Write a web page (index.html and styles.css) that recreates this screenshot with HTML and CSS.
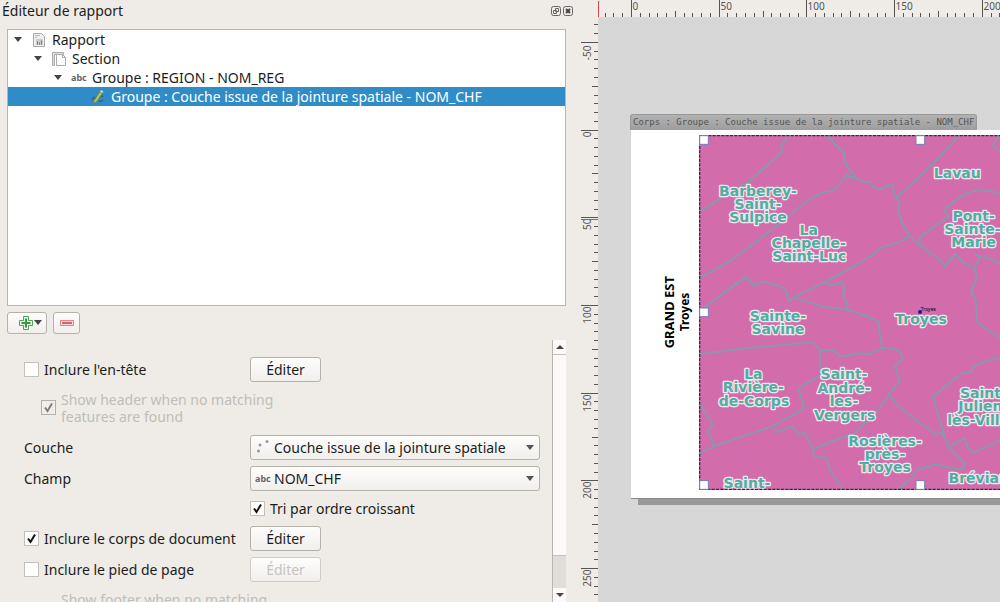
FILE: index.html
```
<!DOCTYPE html>
<html lang="fr">
<head>
    <meta charset="UTF-8">
    <meta name="viewport" content="width=device-width, initial-scale=1.0">
    <title>Éditeur de rapport</title>
    <link rel="stylesheet" href="styles.css">
</head>
<body>
    <aside class="panel">
        <header class="panel-title">
            <h1>Éditeur de rapport</h1>
            <button class="dock-btn" aria-label="Détacher">
                <svg width="10" height="10" viewBox="0 0 10 10"><rect x=".5" y=".5" width="9" height="9" rx="2"/><path d="M4.500 2.500h3v3h-3zM2.500 4.500h3v3h-3z"/></svg>
            </button>
            <button class="dock-btn" aria-label="Fermer">
                <svg width="10" height="10" viewBox="0 0 10 10"><rect x=".5" y=".5" width="9" height="9" rx="2"/><path class="cross" d="M3 3l4 4M7 3l-4 4"/></svg>
            </button>
        </header>

        <ul class="tree">
            <li class="row level-0">
                <span class="arrow"></span>
                <svg class="icon" width="16" height="16" viewBox="0 0 16 16"><path d="M2.500 1.500h8l3 3v10h-11z" fill="#eee" stroke="#aaa"/><path d="M4 3.500h5M4 5.500h2" stroke="#bbb"/><rect x="5" y="7" width="7" height="6" fill="#ccc"/><path d="M6.500 12.500v-3M8.500 12.500v-2M10.500 12.500v-4" stroke="#777"/></svg>
                <span>Rapport</span>
            </li>
            <li class="row level-1">
                <span class="arrow"></span>
                <svg class="icon" width="16" height="16" viewBox="0 0 16 16"><path d="M1.500 1.500h11v2h-9v11h-2z" fill="#ddd" stroke="#aaa"/><path d="M5.500 3.500h6l3 3v8h-9z" fill="#fff" stroke="#aaa"/><path d="M11.500 3.500v3h3" fill="none" stroke="#aaa"/></svg>
                <span>Section</span>
            </li>
            <li class="row level-2">
                <span class="arrow"></span>
                <span class="abc">abc</span>
                <span>Groupe : REGION - NOM_REG</span>
            </li>
            <li class="row level-3 selected">
                <svg class="icon" width="16" height="16" viewBox="0 0 16 16"><path d="M2 11q2-5 4 0M9 12q3 1 4-1M9 8q3-2 4 0" fill="none" stroke="#3c5f7a" stroke-width="1.500"/><path d="M4 11.500l6-9 2.500 1.500-6 9-3 1.500z" fill="#b5c65c" stroke="#5d7440" stroke-width=".7"/><path d="M10 2.500l1-1.500 2.500 1.500-1 1.500z" fill="#d8d8b0"/></svg>
                <span>Groupe : Couche issue de la jointure spatiale - NOM_CHF</span>
            </li>
        </ul>

        <div class="toolbar">
            <button class="tool add" aria-label="Ajouter">
                <svg width="16" height="16" viewBox="0 0 16 16"><path d="M5.500 1.500h5v4h4v5h-4v4h-5v-4h-4v-5h4z" fill="#e4f3e4" stroke="#57a05c"/><path d="M8 3.500v9M3.500 8h9" stroke="#3f9347" stroke-width="2"/></svg>
                <span class="arrow"></span>
            </button>
            <button class="tool remove" aria-label="Supprimer">
                <svg width="16" height="16" viewBox="0 0 16 16"><rect x="1.500" y="5.500" width="13" height="5" fill="#fbdcdc" stroke="#e3868b"/><path d="M3 8h10" stroke="#e0606a" stroke-width="2"/></svg>
            </button>
        </div>

        <div class="scroll-area">
            <form class="form">
                <label class="check"><input type="checkbox">Inclure l'en-tête</label>
                <button type="button" class="btn">Éditer</button>

                <label class="check hint"><input type="checkbox" checked disabled>Show header when no matching features are found</label>

                <label for="layer">Couche</label>
                <div class="combo">
                    <svg class="combo-icon" width="16" height="16" viewBox="0 0 16 16"><g fill="#999"><circle cx="5" cy="7" r="1.500"/><circle cx="12" cy="3.500" r="1.500"/><circle cx="3.500" cy="13" r="1.500"/></g></svg>
                    <select id="layer"><option>Couche issue de la jointure spatiale</option></select>
                </div>

                <label for="field">Champ</label>
                <div class="combo">
                    <span class="combo-icon abc">abc</span>
                    <select id="field"><option>NOM_CHF</option></select>
                </div>

                <label class="check second"><input type="checkbox" checked>Tri par ordre croissant</label>

                <label class="check"><input type="checkbox" checked>Inclure le corps de document</label>
                <button type="button" class="btn">Éditer</button>

                <label class="check"><input type="checkbox">Inclure le pied de page</label>
                <button type="button" class="btn" disabled>Éditer</button>

                <label class="check hint footer-hint"><input type="checkbox" checked disabled>Show footer when no matching features are found</label>
            </form>
            <div class="scrollbar">
                <span class="step up"></span>
                <span class="thumb"></span>
                <span class="step down"></span>
            </div>
        </div>
    </aside>

    <svg class="ruler ruler-y" id="rulerY"></svg>

    <main class="layout">
        <svg class="ruler ruler-x" id="rulerX"></svg>
        <div class="canvas">
            <div class="section-tab">Corps : Groupe : Couche issue de la jointure spatiale - NOM_CHF</div>
            <div class="paper">
                <div class="side-title">
                    <strong class="region">GRAND EST</strong>
                    <strong class="town">Troyes</strong>
                </div>
                <!-- 3 map units per pixel -->
                <svg class="map" viewBox="28 15 1329 1065">
                    <rect x="28" y="15" width="1329" height="1065" fill="#d26cab"/>
                    <g class="borders">
                        <path d="M300 15L275 45 277 65 262 80 240 100 175 155 100 200 28 247"/>
                        <path d="M410 15L440 45 465 70 463 90 480 120 500 145M470 135L490 150"/>
                        <path d="M28 444L110 400 150 372 200 335 300 255 340 222 390 190 430 182 460 150 470 135 500 145 520 155 540 155 550 170 575 178 590 167 610 165 612 190 620 203"/>
                        <path d="M810 15L740 90 685 145 620 203 630 215 627 250 640 285 660 318 690 345 705 355 750 390 765 408 797 372 825 400 855 415"/>
                        <path d="M660 318L620 340 575 352 555 370 500 405 402 458 313 502"/>
                        <path d="M705 355L690 345 690 322 740 285 778 260 765 245 770 232 820 195 850 184 880 180 910 184 950 198"/>
                        <path d="M950 12L925 20 910 45 930 65 950 70M855 375L900 385 950 410"/>
                        <path d="M28 545L100 490 170 440 195 468 215 455 270 468 288 480 297 512 313 502"/>
                        <path d="M402 458L430 465 460 457 465 475 460 500 470 515 475 540"/>
                        <path d="M313 502L400 530 475 540 530 558 567 575 570 610 578 655"/>
                        <path d="M28 672L200 652 370 637 390 660 430 660 445 673 460 680 500 670 540 672 578 655 610 655 630 665 640 685 615 710 632 750 600 790 585 815 545 860 490 912 440 930 370 957"/>
                        <path d="M390 660L392 735 325 775 345 835 250 888 200 905 75 948 28 971"/>
                        <path d="M855 415L862 440 845 485 858 510 862 575 895 600 950 635M870 380L862 400 855 415"/>
                        <path d="M950 682L895 690 850 710 845 725 820 728 790 750 730 800 750 870 765 920 775 950 825 1000 820 1015 795 1017 740 1003 680 1020 670 1040 625 1077"/>
                        <path d="M600 795L620 825 680 870 740 915 748 905 765 920"/>
                        <path d="M250 888L260 907 310 890 325 912 345 910 370 957 372 980 410 983 420 1020 460 1077"/>
                        <path d="M28 815L70 885 55 905 75 948"/>
                        <path d="M775 952L825 925 835 955 855 968 880 955 950 922"/>
                    </g>
                    <g class="places">
                        <text x="205" y="197">Barberey-</text><text x="205" y="236">Saint-</text><text x="205" y="275">Sulpice</text>
                        <text x="357" y="316">La</text><text x="357" y="355">Chapelle-</text><text x="359" y="394">Saint-Luc</text>
                        <text x="803" y="145">Lavau</text>
                        <text x="852" y="274">Pont-</text><text x="848" y="313">Sainte-</text><text x="852" y="352">Marie</text>
                        <text x="265" y="574">Sainte-</text><text x="265" y="613">Savine</text>
                        <text x="694" y="583">Troyes</text>
                        <text x="191" y="747">La</text><text x="191" y="787">Rivière-</text><text x="193" y="827">de-Corps</text>
                        <text x="463" y="747">Saint-</text><text x="463" y="788">André-</text><text x="463" y="828">les-</text><text x="465" y="869">Vergers</text>
                        <text x="586" y="948">Rosières-</text><text x="586" y="988">près-</text><text x="586" y="1027">Troyes</text>
                        <text x="172" y="1073">Saint-</text>
                        <text x="881" y="804">Saint-</text><text x="881" y="844">Julien-</text><text x="878" y="884">lès-Villas</text>
                        <text x="909" y="1058">Bréviandes</text>
                    </g>
                    <circle cx="691" cy="546" r="6" fill="#1a1a80"/>
                    <text class="town-label" x="693" y="543">Troyes</text>
                    <rect class="frame" x="30" y="17" width="1325" height="1061"/>
                    <g class="handles">
                        <rect x="30" y="17" width="26" height="26"/>
                        <rect x="679" y="17" width="26" height="26"/>
                        <rect x="30" y="534" width="26" height="26"/>
                        <rect x="30" y="1052" width="26" height="26"/>
                        <rect x="679" y="1052" width="26" height="26"/>
                    </g>
                </svg>
            </div>
        </div>
    </main>

    <script>
        const STEP = 8.77; // 5 mm on screen
        const NS = 'http://www.w3.org/2000/svg';

        function add(parent, name, attrs, text) {
            const el = document.createElementNS(NS, name);
            for (const key in attrs) el.setAttribute(key, attrs[key]);
            if (text !== undefined) el.textContent = text;
            parent.appendChild(el);
        }

        function tickLength(mm) {
            if (mm % 50 === 0) return 17;
            return mm % 25 === 0 ? 6 : 4;
        }

        function drawRulerX() {
            const ruler = document.getElementById('rulerX');
            const width = ruler.clientWidth;
            ruler.innerHTML = '';
            for (let i = -3; 33 + i * STEP < width; i++) {
                const mm = i * 5;
                const x = Math.round(33 + i * STEP) + 0.5;
                add(ruler, 'path', { d: `M${x} 17v-${tickLength(mm)}` });
                if (mm % 50 === 0) add(ruler, 'text', { x: x + 1, y: 10 }, mm);
            }
            add(ruler, 'path', { class: 'cursor', d: 'M0.5 1v16' });
        }

        function drawRulerY() {
            const ruler = document.getElementById('rulerY');
            const height = ruler.clientHeight;
            ruler.innerHTML = '';
            for (let i = -12; 130 + i * STEP < height; i++) {
                const mm = i * 5;
                const y = Math.round(129.6 + i * STEP) + 0.5;
                add(ruler, 'path', { d: `M28 ${y}h-${tickLength(mm)}` });
                if (mm % 50 === 0) {
                    const end = mm < 0 ? y + 3 : y + 1;
                    add(ruler, 'text', { 'text-anchor': 'end', transform: `translate(21 ${end}) rotate(-90)` }, mm);
                }
            }
            add(ruler, 'path', { class: 'cursor', d: 'M28 219.5h-17' });
        }

        function drawRulers() {
            drawRulerX();
            drawRulerY();
        }

        window.addEventListener('resize', drawRulers);
        drawRulers();
    </script>
</body>
</html>
```
FILE: styles.css
```
* {
    box-sizing: border-box;
}
body {
    margin: 0;
    height: 100vh;
    overflow: hidden;
    display: grid;
    grid-template-columns: minmax(0, 57%) 28px minmax(0, 1fr);
    background: #efece7;
    color: #1c1c1c;
    font-family: "Noto Sans", "Open Sans", sans-serif;
    font-size: 14px;
    line-height: 19px;
}
button, select, input {
    font: inherit;
    color: inherit;
    margin: 0;
}

/* report panel */
.panel {
    display: flex;
    flex-direction: column;
    min-height: 0;
    height: 100vh;
    padding: 0 4px 0 7px;
}
.panel-title {
    display: flex;
    align-items: center;
    gap: 2px;
    height: 21px;
    margin: 0 -8px 8px -5px;
    padding-right: 1px;
}
.panel-title h1 {
    flex: 1;
    margin: 0;
    font-size: 14px;
    font-weight: normal;
}
.dock-btn {
    display: flex;
    padding: 0;
    border: none;
    background: none;
}
.dock-btn svg {
    fill: none;
    stroke: #666;
}
.dock-btn .cross {
    stroke: #444;
    stroke-width: 2;
}
.tree {
    flex: none;
    height: 46vh;
    margin: 0;
    padding: 0;
    list-style: none;
    background: #fff;
    border: 1px solid #b9b4ad;
}
.row {
    display: flex;
    align-items: center;
    height: 19px;
    white-space: nowrap;
}
.level-0 {
    padding-left: 6px;
}
.level-1 {
    padding-left: 26px;
}
.level-2 {
    padding-left: 46px;
}
.level-3 {
    padding-left: 82px;
}
.selected {
    background: #308cc6;
    color: #fff;
}
.row .arrow {
    margin-right: 9px;
}
.row .icon {
    margin-right: 5px;
}
.row .abc {
    width: 16px;
    margin-right: 5px;
}
.arrow {
    width: 0;
    border: 4px solid transparent;
    border-top: 5px solid #444;
    border-bottom: none;
}
.abc {
    font-size: 9px;
    font-weight: bold;
    color: #666;
}
.toolbar {
    display: flex;
    gap: 6px;
    margin: 6px 0;
}
.tool, .btn, select {
    border: 1px solid #b5b1ab;
    border-radius: 3px;
    background: linear-gradient(#fdfdfc, #f1efec);
}
.tool {
    display: flex;
    align-items: center;
    justify-content: center;
    height: 22px;
    padding: 0;
}
.add {
    width: 40px;
    padding-left: 6px;
}
.remove {
    width: 27px;
}

/* options */
.scroll-area {
    flex: 1;
    min-height: 0;
    display: flex;
    overflow: hidden;
}
.form {
    flex: 1;
    display: grid;
    grid-template-columns: 220px minmax(0, 1fr);
    grid-auto-rows: max-content;
    align-items: center;
    gap: 6px;
    padding: 17px 12px 0 17px;
}
.check {
    display: flex;
    align-items: center;
    gap: 5px;
    white-space: nowrap;
}
.check input {
    appearance: none;
    flex: none;
    width: 15px;
    height: 15px;
    border: 1px solid #c3bfb9;
    background: #fff;
}
.check input:checked {
    background: #fff url("data:image/svg+xml,%3Csvg xmlns='http://www.w3.org/2000/svg' viewBox='0 0 13 13'%3E%3Cpath d='M3 6.500l2.500 3.500L10 2.500' fill='none' stroke='%23111' stroke-width='2'/%3E%3C/svg%3E");
}
.check input:disabled {
    background-color: #f3f1ee;
    opacity: 0.5;
    border-color: #777;
}
.hint {
    grid-column: 1 / -1;
    max-width: 260px;
    padding: 3px 0 4px 17px;
    line-height: 17px;
    white-space: normal;
    color: #c0bdb9;
}
.footer-hint {
    align-items: flex-end;
}
.second {
    grid-column: 2;
    height: 23px;
}
.btn {
    justify-self: start;
    width: 71px;
    height: 25px;
    padding: 0;
}
.btn:disabled {
    color: #c6c3bf;
    border-color: #cfccc7;
}
.combo {
    position: relative;
}
.combo-icon {
    position: absolute;
    top: 3px;
    left: 5px;
}
.combo select {
    display: block;
    appearance: none;
    width: 100%;
    height: 25px;
    padding: 0 20px 0 23px;
    background: url("data:image/svg+xml,%3Csvg xmlns='http://www.w3.org/2000/svg' width='8' height='5'%3E%3Cpath d='M0 0h8L4 5z' fill='%23555'/%3E%3C/svg%3E") no-repeat right 5px center, linear-gradient(#fdfdfc, #f1efec);
}
.scrollbar {
    display: flex;
    flex-direction: column;
    width: 14px;
    background: #e0deda;
    border-left: 1px solid #b9b4ad;
}
.step {
    display: flex;
    align-items: center;
    justify-content: center;
    height: 14px;
    background: #fbfaf9;
}
.step::before {
    content: "";
    border: 4px solid transparent;
    border-top: 4px solid #444;
    border-bottom: none;
}
.up::before {
    transform: rotate(180deg);
}
.thumb {
    height: 77%;
    background: #fbfaf9;
    border: 1px solid #c6c2bc;
    border-width: 1px 0;
}
.down {
    margin-top: auto;
}

/* rulers */
.ruler {
    display: block;
    stroke: #555;
    font-size: 10px;
}
.ruler text {
    stroke: none;
    fill: #555;
}
.ruler .cursor {
    stroke: #e0404a;
}
.ruler-x {
    width: 100%;
    height: 17px;
}
.ruler-y {
    width: 28px;
    height: 100vh;
}

/* layout view */
.layout {
    display: flex;
    flex-direction: column;
    height: 100vh;
}
.canvas {
    position: relative;
    flex: 1;
    overflow: hidden;
    background: #d7d7d7;
}
.section-tab {
    position: absolute;
    top: 97px;
    left: 32px;
    padding: 0 2px;
    border: 1px solid #999;
    border-bottom: none;
    border-radius: 3px 3px 0 0;
    background: linear-gradient(#b2b2b2, #9d9d9d);
    color: #555;
    font: 9px/15px "DejaVu Sans Mono", monospace;
    white-space: nowrap;
}
.paper {
    position: absolute;
    top: 113px;
    left: 33px;
    display: flex;
    align-items: center;
    width: 521px;
    height: 369px;
    padding-bottom: 3px;
    background: #fff;
    border-bottom: 1px solid #888;
    box-shadow: 7px 6px 0 #999;
}
.side-title {
    display: flex;
    flex-direction: column;
    align-items: center;
    writing-mode: vertical-rl;
    transform: rotate(180deg);
    width: 68px;
    padding-right: 31px;
    color: #000;
    font-size: 12px;
    line-height: 15px;
}
.region {
    font-size: 13px;
}
.map {
    display: block;
    flex: none;
    width: 443px;
    height: 355px;
}
.borders path {
    fill: none;
    stroke: #8a98aa;
    stroke-width: 6;
    stroke-linejoin: round;
}
.places text {
    fill: #4fae9f;
    stroke: #f3e4ef;
    stroke-width: 8;
    stroke-linejoin: round;
    paint-order: stroke;
    font-family: "DejaVu Sans", sans-serif;
    font-size: 42px;
    font-weight: bold;
    text-anchor: middle;
}
.town-label {
    font-size: 15px;
}
.frame {
    fill: none;
    stroke: #43204a;
    stroke-width: 4;
    stroke-dasharray: 9 4;
}
.handles rect {
    fill: #fff;
    stroke: #7b7bb8;
    stroke-width: 3;
}
```
